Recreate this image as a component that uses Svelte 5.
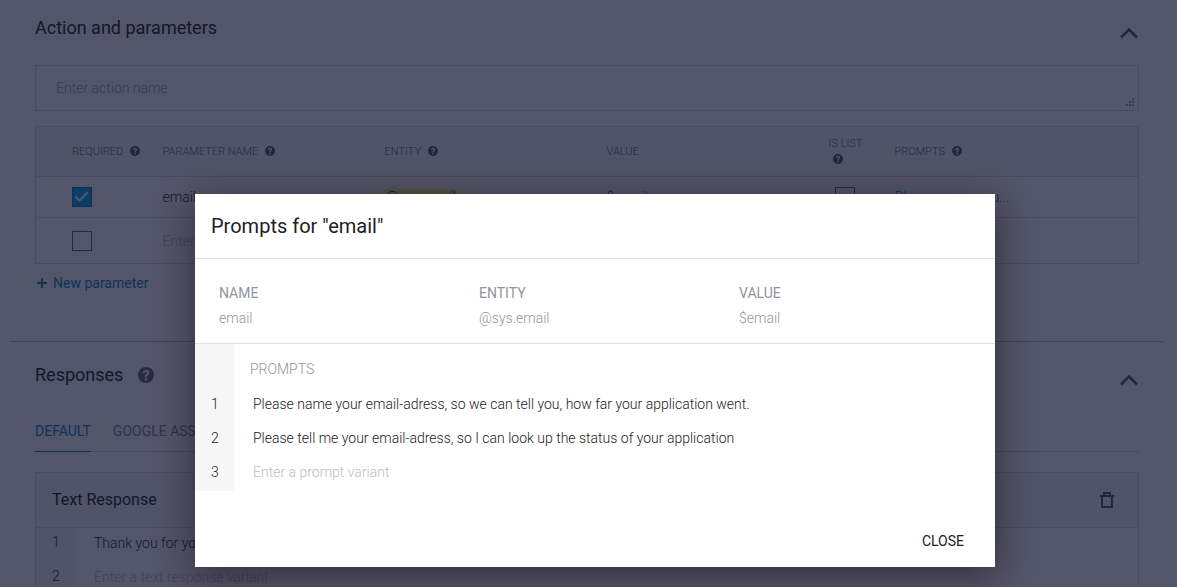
<script>
  let actionName = $state('');
  let required = $state([true, false]);
  let isList = $state([false]);
  let prompts = $state([
    'Please name your email-adress, so we can tell you, how far your application went.',
    'Please tell me your email-adress, so I can look up the status of your application',
    ''
  ]);
  let responses = $state(['Thank you for your application', '']);
</script>

{#snippet help(size)}
  <svg class="help" width={size} height={size} viewBox="0 0 24 24" aria-hidden="true">
    <path
      fill="currentColor"
      fill-rule="evenodd"
      d="M12 0a12 12 0 1 0 0 24a12 12 0 0 0 0-24zM10.3 17h3.4v3.2h-3.4zM7 9.2C7.100 5.900 9.200 4 12.200 4c3 0 5 1.700 5 4.300c0 1.800-.9 2.900-2.200 3.900c-1 .8-1.300 1.200-1.300 2.300v.7h-3.300v-1.100c0-1.700.6-2.700 2-3.700c1-.7 1.400-1.200 1.400-2c0-.9-.6-1.500-1.600-1.500c-1.100 0-1.800.8-1.900 2.300z"
    />
  </svg>
{/snippet}

{#snippet chevron()}
  <svg width="20" height="14" viewBox="0 0 20 14" aria-hidden="true">
    <path d="M2 11.500L10 3.500L18 11.500" fill="none" stroke="currentColor" stroke-width="2.600" />
  </svg>
{/snippet}

<div class="app">
  <main>
    <section>
      <header class="section-head">
        <h2>Action and parameters</h2>
        <button class="icon" aria-label="Collapse action and parameters">{@render chevron()}</button>
      </header>

      <div class="action">
        <input type="text" aria-label="Action name" placeholder="Enter action name" bind:value={actionName} />
        <svg class="grip" width="8" height="8" viewBox="0 0 8 8" aria-hidden="true">
          <path fill="currentColor" d="M6 0h2v2h-2zM3 3h2v2h-2zM6 3h2v2h-2zM0 6h2v2h-2zM3 6h2v2h-2zM6 6h2v2h-2z" />
        </svg>
      </div>

      <table>
        <colgroup>
          <col class="c-required" /><col /><col /><col /><col class="c-list" /><col class="c-prompts" />
        </colgroup>
        <thead>
          <tr>
            <th>REQUIRED {@render help(10)}</th>
            <th>PARAMETER NAME {@render help(10)}</th>
            <th>ENTITY {@render help(10)}</th>
            <th>VALUE</th>
            <th class="list-head">IS LIST {@render help(10)}</th>
            <th>PROMPTS {@render help(10)}</th>
          </tr>
        </thead>
        <tbody>
          <tr>
            <td><input type="checkbox" aria-label="Required" bind:checked={required[0]} /></td>
            <td>email</td>
            <td><mark>@sys.email</mark></td>
            <td><span class="value">$email</span></td>
            <td class="list"><input type="checkbox" aria-label="Is list" bind:checked={isList[0]} /></td>
            <td><a href="#prompts">Please name you...</a></td>
          </tr>
          <tr class="blank">
            <td><input type="checkbox" aria-label="Required" bind:checked={required[1]} /></td>
            <td><input type="text" aria-label="Parameter name" placeholder="Enter name" /></td>
            <td></td><td></td><td></td><td></td>
          </tr>
        </tbody>
      </table>

      <button class="add">
        <svg width="10" height="10" viewBox="0 0 10 10" aria-hidden="true">
          <path d="M5 0v10M0 5h10" stroke="currentColor" stroke-width="2" />
        </svg>
        New parameter
      </button>
    </section>

    <hr />

    <section>
      <header class="section-head">
        <h2>Responses</h2>
        <span class="big-help">{@render help(16)}</span>
        <button class="icon" aria-label="Collapse responses">{@render chevron()}</button>
      </header>

      <nav>
        <a class="active" href="#default">DEFAULT</a>
        <a href="#google">GOOGLE ASSISTANT</a>
      </nav>

      <div class="card">
        <header>
          <h3>Text Response</h3>
          <button class="icon" aria-label="Delete response">
            <svg width="16" height="18" viewBox="0 0 16 18" aria-hidden="true">
              <path
                fill="currentColor"
                fill-rule="evenodd"
                d="M4 1h8v3h3v2h-1v11H2V6H1V4h3zM6 3v1h4V3zM4 6v9h8V6z"
              />
            </svg>
          </button>
        </header>
        <ol>
          {#each responses as _, i}
            <li>
              <span class="num">{i + 1}</span>
              <input
                type="text"
                aria-label="Response {i + 1}"
                placeholder="Enter a text response variant"
                bind:value={responses[i]}
              />
            </li>
          {/each}
        </ol>
      </div>
    </section>
  </main>

  <div class="backdrop">
    <div class="modal" role="dialog" aria-modal="true" aria-labelledby="modal-title">
      <h1 id="modal-title">Prompts for "email"</h1>
      <dl>
        <div><dt>NAME</dt><dd>email</dd></div>
        <div><dt>ENTITY</dt><dd>@sys.email</dd></div>
        <div><dt>VALUE</dt><dd>$email</dd></div>
      </dl>
      <div class="prompts">
        <div class="prompts-head">PROMPTS</div>
        <ol>
          {#each prompts as _, i}
            <li>
              <span class="num">{i + 1}</span>
              <input
                type="text"
                aria-label="Prompt {i + 1}"
                placeholder="Enter a prompt variant"
                bind:value={prompts[i]}
              />
            </li>
          {/each}
        </ol>
      </div>
      <footer><button class="close">CLOSE</button></footer>
    </div>
  </div>
</div>

<style>
  :global(body) {
    margin: 0;
    background: #fff;
  }
  * {
    box-sizing: border-box;
  }
  .app {
    position: relative;
    height: 100vh;
    overflow: hidden;
    font: 300 14px/20px Roboto, sans-serif;
    color: #212121;
  }
  h1, h2, h3, dl, dd, ol {
    margin: 0;
    padding: 0;
  }
  h1, h2, h3 {
    font-weight: 400;
  }
  ol {
    list-style: none;
  }
  button {
    border: 0;
    padding: 0;
    background: none;
    font: inherit;
    color: inherit;
    cursor: pointer;
  }
  a {
    color: #0288d1;
    text-decoration: none;
  }
  input[type='text'] {
    display: block;
    width: 100%;
    border: 0;
    padding: 0;
    background: none;
    outline: 0;
    font: inherit;
    color: inherit;
  }
  ::placeholder {
    color: #bdbdbd;
    opacity: 1;
  }
  .action ::placeholder {
    color: #a0a0a0;
  }
  section {
    padding: 0 38px 0 35px;
  }
  .section-head {
    display: flex;
    align-items: center;
    height: 24px;
  }
  section:first-child .section-head {
    margin-top: 16px;
  }
  h2 {
    font-size: 18px;
    line-height: 24px;
  }
  .icon {
    display: flex;
    margin-left: auto;
    color: #555;
  }
  .section-head .icon {
    padding-top: 10px;
  }
  .big-help {
    display: flex;
    margin-left: 15px;
    color: #666;
  }
  .action {
    position: relative;
    margin-top: 25px;
    padding: 12px 20px;
    border: 1px solid #d8d8d8;
  }
  .grip {
    position: absolute;
    right: 4px;
    bottom: 4px;
    color: #aaa;
  }
  table {
    width: 100%;
    margin-top: 15px;
    border: 1px solid #d8d8d8;
    border-collapse: collapse;
    table-layout: fixed;
  }
  .c-required {
    width: 119px;
  }
  .c-list {
    width: 66px;
  }
  .c-prompts {
    width: 252px;
  }
  th, td {
    padding: 0 8px;
    text-align: left;
  }
  th:first-child, td:first-child {
    padding-left: 36px;
    padding-right: 0;
  }
  thead tr {
    height: 50px;
    background: #f7f7f7;
  }
  th {
    font-size: 11px;
    line-height: 16px;
    font-weight: 300;
    color: #666;
  }
  th .help {
    margin-left: 4px;
    vertical-align: -1px;
    color: #555;
  }
  tbody tr {
    height: 41px;
    border-top: 1px solid #d8d8d8;
  }
  tbody tr.blank {
    height: 46px;
  }
  mark {
    padding: 0 1px;
    background: #fff176;
    color: inherit;
  }
  .value {
    color: #1565d8;
  }
  td.list {
    padding-left: 14px;
  }
  input[type='checkbox'] {
    display: block;
    appearance: none;
    width: 20px;
    height: 20px;
    margin: 0;
    border: 1px solid #616161;
  }
  input[type='checkbox']:checked {
    border-color: #0277bd;
    background: #03a9f4
      url("data:image/svg+xml,%3Csvg xmlns='http://www.w3.org/2000/svg' viewBox='0 0 18 18'%3E%3Cpath d='M2.500 8.500L6.500 12.500L15 4' fill='none' stroke='white' stroke-width='2'/%3E%3C/svg%3E");
  }
  .add {
    display: flex;
    align-items: center;
    gap: 6px;
    margin: 9px 0 0 2px;
    font-weight: 400;
    color: #0288d1;
  }
  hr {
    height: 1px;
    margin: 48px 13px 21px 10px;
    border: 0;
    background: #bdbdbd;
  }
  nav {
    display: flex;
    gap: 22px;
    margin-top: 34px;
    border-bottom: 1px solid #d0d0d0;
  }
  nav a {
    height: 31px;
    margin-bottom: -1px;
    font-weight: 400;
    color: #888;
  }
  nav a.active {
    border-bottom: 1px solid #0288d1;
    color: #0288d1;
  }
  .card {
    margin-top: 20px;
    border: 1px solid #d8d8d8;
  }
  .card header {
    display: flex;
    align-items: center;
    height: 55px;
    padding: 0 23px 0 16px;
    border-bottom: 1px solid #d8d8d8;
    background: #f7f7f7;
  }
  h3 {
    font-size: 16px;
    line-height: 20px;
  }
  li {
    display: flex;
    align-items: center;
    height: 34px;
  }
  .num {
    flex: none;
    align-self: stretch;
    width: 40px;
    padding: 0 16px;
    background: #f7f7f7;
    line-height: 34px;
  }
  .card .num {
    line-height: 28px;
  }
  .card li {
    align-items: flex-start;
  }
  li input[type='text'] {
    margin: 0 18px;
  }
  .card li input {
    height: 30px;
  }
  .backdrop {
    position: absolute;
    inset: 0;
    display: flex;
    align-items: flex-end;
    justify-content: center;
    padding: 0 0 20px 13px;
    background: rgba(16, 20, 46, 0.72);
  }
  .modal {
    width: 100%;
    max-width: 800px;
    background: #fff;
    box-shadow: 0 8px 36px rgba(0, 0, 0, 0.45);
  }
  h1 {
    padding: 20px 16px;
    border-bottom: 1px solid #e0e0e0;
    font-size: 20px;
    line-height: 24px;
  }
  dl {
    display: grid;
    grid-template-columns: 260px 260px 1fr;
    padding: 24px 0 15px 24px;
    border-bottom: 1px solid #e0e0e0;
    color: #8f959e;
  }
  dt {
    margin-bottom: 5px;
    font-weight: 400;
  }
  .prompts {
    padding-bottom: 2px;
    background: linear-gradient(to right, #f7f7f7 40px, transparent 40px);
  }
  .prompts-head {
    padding: 15px 0 8px 55px;
    color: #8f959e;
  }
  footer {
    display: flex;
    justify-content: flex-end;
    padding: 40px 31px 16px;
  }
  .close {
    font-weight: 400;
  }
</style>
